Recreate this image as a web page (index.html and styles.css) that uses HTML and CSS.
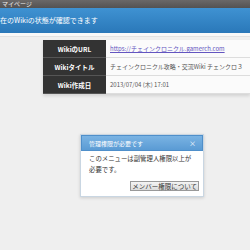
FILE: index.html
```html
<!DOCTYPE html>
<html lang="ja">
  <head>
    <meta charset="UTF-8" />
    <title>マイページ</title>
    <link rel="stylesheet" href="styles.css">
  </head>
  <body>
    <div class="topbar">マイページ</div>
    <div class="lead">在のWikiの状態が確認できます</div>
    <div class="strip"></div>
    <table class="info">
      <tr>
        <th>WikiのURL</th>
        <td><a href="#">https://チェインクロニクル.gamerch.com</a></td>
      </tr>
      <tr>
        <th>Wikiタイトル</th>
        <td>チェインクロニクル攻略・交流Wiki チェンクロ３</td>
      </tr>
      <tr>
        <th>Wiki作成日</th>
        <td>2013/07/04 (木) 17:01</td>
      </tr>
    </table>
    <div class="dialog">
      <div class="dialog-head">
        <span>管理権限が必要です</span>
        <span class="close">×</span>
      </div>
      <div class="dialog-body">
        <p>このメニューは副管理人権限以上が<br>必要です。</p>
        <div class="actions">
          <button>メンバー権限について</button>
        </div>
      </div>
    </div>
  </body>
</html>
```

FILE: styles.css
```css
body {
  margin: 0;
  background-color: #efefef;
  font-family: "Noto Sans CJK JP", "Liberation Sans", sans-serif;
  color: #444;
  overflow: hidden;
  height: 250px;
}
.topbar {
  height: 8px;
  line-height: 8px;
  padding-left: 2px;
  font-size: 6px;
  color: #eee;
  background: linear-gradient(#6a6868, #545252);
}
.lead {
  height: 25px;
  line-height: 25px;
  font-size: 7px;
  color: white;
  background: linear-gradient(#3f92d2, #2a78b9);
}
.strip {
  height: 3px;
  background-color: #f8f8f8;
  border-bottom: 1px solid #e2e2e2;
}
.info {
  margin: 3px 0 0 43px;
  border-collapse: collapse;
  width: 207px;
  box-shadow: 0 2px 3px rgba(0, 0, 0, 0.12);
}
.info th {
  width: 63px;
  height: 17px;
  padding: 0;
  background-color: #333;
  color: white;
  font-size: 6.5px;
  font-weight: bold;
  border-bottom: 1px solid #555;
}
.info td {
  padding: 0 0 0 4px;
  background-color: #fbfbfb;
  border-bottom: 1px solid #ddd;
  font-size: 6px;
  color: #555;
  white-space: nowrap;
}
.info a {
  color: #6355c0;
}
.dialog {
  width: 122px;
  margin: 40px 0 0 80px;
  background-color: white;
  border: 1px solid #c9d6e2;
  box-shadow: 0 1px 3px rgba(0, 0, 0, 0.15);
}
.dialog-head {
  display: flex;
  justify-content: space-between;
  align-items: center;
  height: 14px;
  padding: 0 6px 0 7px;
  background: linear-gradient(#7ab3e3, #5a9bd4);
  border: 1px solid #4f8fca;
  color: white;
  font-size: 6px;
}
.close {
  font-size: 7px;
}
.dialog-body {
  padding: 2px 4px 5px 8px;
}
.dialog-body p {
  margin: 0;
  font-size: 6.4px;
  line-height: 11px;
  color: #333;
}
.actions {
  display: flex;
  justify-content: flex-end;
  margin-top: 6px;
}
button {
  padding: 0 1px;
  font-family: inherit;
  font-size: 6.5px;
  line-height: 8px;
  color: #333;
  background: linear-gradient(#f4f4f4, #dcdcdc);
  border: 1px solid #999;
  border-radius: 0;
}
```
